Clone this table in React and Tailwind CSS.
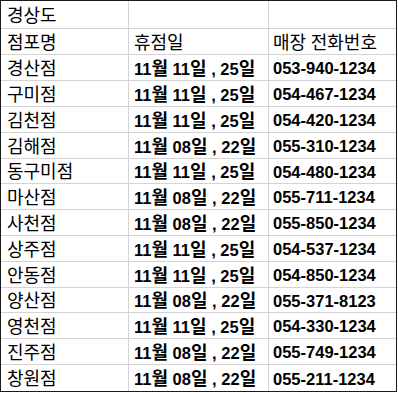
import React from 'react';

const stores = [
  ['경산점', '11월 11일 , 25일', '053-940-1234'],
  ['구미점', '11월 11일 , 25일', '054-467-1234'],
  ['김천점', '11월 11일 , 25일', '054-420-1234'],
  ['김해점', '11월 08일 , 22일', '055-310-1234'],
  ['동구미점', '11월 11일 , 25일', '054-480-1234'],
  ['마산점', '11월 08일 , 22일', '055-711-1234'],
  ['사천점', '11월 08일 , 22일', '055-850-1234'],
  ['상주점', '11월 11일 , 25일', '054-537-1234'],
  ['안동점', '11월 11일 , 25일', '054-850-1234'],
  ['양산점', '11월 08일 , 22일', '055-371-8123'],
  ['영천점', '11월 11일 , 25일', '054-330-1234'],
  ['진주점', '11월 08일 , 22일', '055-749-1234'],
  ['창원점', '11월 08일 , 22일', '055-211-1234'],
];

const font = { fontFamily: '"Liberation Sans", "Noto Sans CJK KR", sans-serif' };

// hangul runs are drawn a bit larger so they match the excel look
function Txt({ children }) {
  const parts = String(children).split(/([\uAC00-\uD7A3]+)/).filter(Boolean);
  return (
    <span className="text-[16.5px] leading-none whitespace-pre">
      {parts.map((p, i) =>
        /[\uAC00-\uD7A3]/.test(p) ? (
          <span key={i} className="text-[18px]">{p}</span>
        ) : (
          <span key={i}>{p}</span>
        )
      )}
    </span>
  );
}

function Row({ cells, bold, last, height }) {
  return (
    <div className={`flex ${height} ${last ? '' : 'border-b border-[#d4d4d4]'}`}>
      <div className="w-[128px] border-r border-[#d4d4d4] pl-[6px] pt-[2px] flex items-center">
        <Txt>{cells[0]}</Txt>
      </div>
      <div
        className={`w-[140px] border-r border-[#d4d4d4] pl-[5px] pt-[2px] flex items-center ${bold ? 'font-bold' : ''}`}
      >
        <Txt>{cells[1]}</Txt>
      </div>
      <div className={`flex-1 pl-[4px] pt-[2px] flex items-center ${bold ? 'font-bold' : ''}`}>
        <Txt>{cells[2]}</Txt>
      </div>
    </div>
  );
}

export default function App() {
  return (
    <div className="w-[398px] h-[393px] bg-white">
      <div className="w-[397px] border border-[#1a1a1a] text-black" style={font}>
        <Row cells={['경상도', '', '']} height="h-[28px]" />
        <Row cells={['점포명', '휴점일', '매장 전화번호']} height="h-[26px]" />
        {stores.map((s, i) => (
          <Row
            key={s[0]}
            cells={s}
            bold
            last={i === stores.length - 1}
            height={i === 4 || i === 9 ? 'h-[25px]' : 'h-[26px]'}
          />
        ))}
      </div>
    </div>
  );
}
